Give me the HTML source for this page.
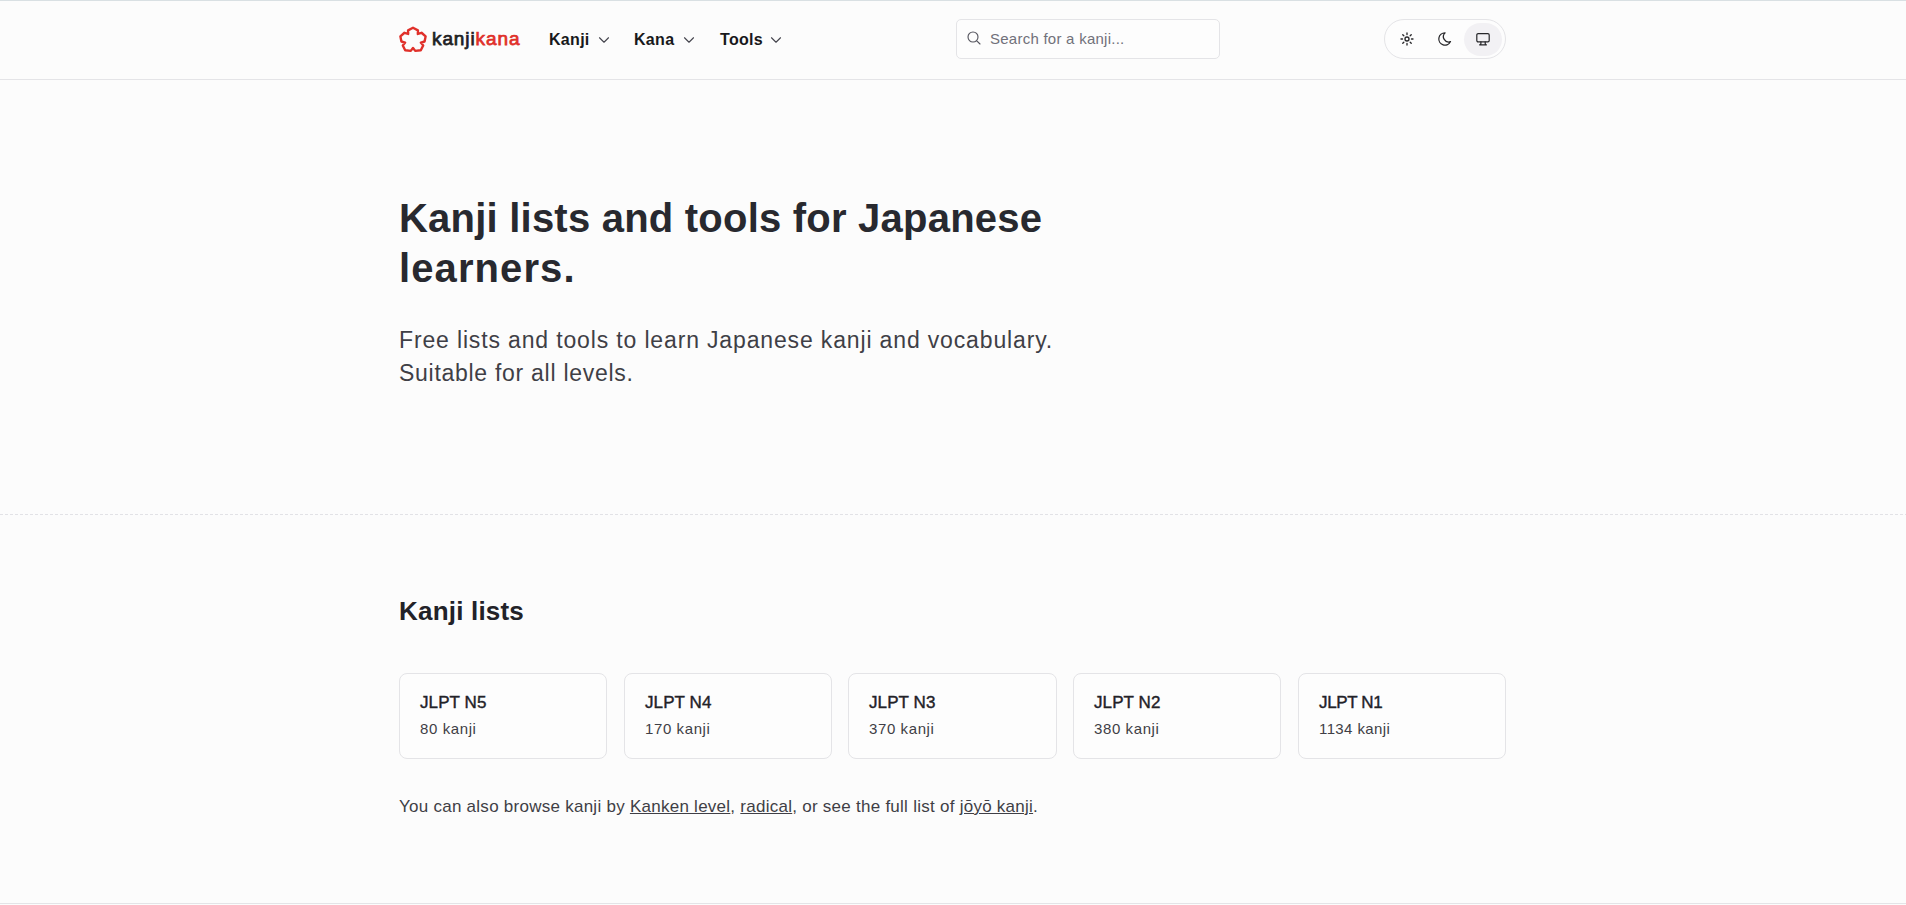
<!DOCTYPE html>
<html>
<head>
<meta charset="utf-8">
<style>
html,body{margin:0;padding:0;}
body{width:1906px;height:905px;overflow:hidden;background:#fcfcfc;position:relative;font-family:"Liberation Sans",sans-serif;color:#27272a;}
.abs{position:absolute;white-space:nowrap;}
#topline{position:absolute;left:0;top:0;width:1906px;height:1px;background:#d9e0e3;}
#header{position:absolute;left:0;top:0;width:1906px;height:79px;border-bottom:1px solid #e4e4e7;background:#fcfcfc;}
#logo{position:absolute;left:396px;top:22.7px;width:34px;height:34px;}
#logotext{left:432px;top:26.5px;font-size:19px;line-height:24px;letter-spacing:0.9px;font-weight:normal;-webkit-text-stroke:0.75px #1f1f24;color:#1f1f24;}
#logotext span{-webkit-text-stroke:0.75px #e0302a;}
#logotext span{color:#e0302a;}
.nav{top:31px;font-size:16px;line-height:18px;font-weight:bold;color:#18181b;letter-spacing:0.3px;}
.chev{position:absolute;width:18px;height:18px;}
#search{position:absolute;left:956px;top:19px;width:262px;height:38px;border:1px solid #e4e4e7;border-radius:5px;background:#fdfdfd;}
#searchtext{left:990px;top:30px;font-size:15px;line-height:18px;color:#71717a;letter-spacing:0.25px;}
#theme{position:absolute;left:1384px;top:19px;width:120px;height:38px;border:1px solid #e4e4e7;border-radius:20px;background:#fdfdfd;}
#active{position:absolute;left:1464px;top:23px;width:38px;height:33px;border-radius:16.5px;background:#f2f1f4;}
.ico{position:absolute;width:16px;height:16px;}
#h1{left:399px;top:193px;font-size:40px;line-height:50px;font-weight:bold;color:#28292f;}
#h1 .l1{letter-spacing:0.22px}#h1 .l2{letter-spacing:1.1px}
#sub{left:399px;top:324px;font-size:23px;line-height:33px;color:#3f3f46;}
#sub .l1{letter-spacing:0.85px}#sub .l2{letter-spacing:0.72px}
#dash{position:absolute;left:0;top:514px;width:1906px;height:1px;background:repeating-linear-gradient(90deg,#e2e2e6 0 3px,transparent 3px 5px);}
#h2{left:399px;top:595px;font-size:26px;line-height:32px;font-weight:bold;color:#222228;letter-spacing:0.2px;}
.card{position:absolute;top:673px;width:206px;height:84px;border:1px solid #e4e4e7;border-radius:8px;background:#fdfdfd;}
.ct{position:absolute;left:20px;top:18px;font-size:17px;line-height:22px;font-weight:normal;-webkit-text-stroke:0.4px #222228;color:#222228;white-space:nowrap;letter-spacing:0.1px;}
.cs{position:absolute;left:20px;top:44.5px;font-size:15px;line-height:20px;color:#3f3f46;white-space:nowrap;letter-spacing:0.6px;}
#para{left:399px;top:795px;font-size:17px;line-height:24px;color:#3f3f46;letter-spacing:0.26px;}
#para a{color:#3f3f46;text-decoration:underline;text-underline-offset:1px;}
#bottomline{position:absolute;left:0;top:903px;width:1906px;height:1px;background:#e4e4e7;}
</style>
</head>
<body>
<div id="header"></div>
<div id="topline"></div>
<svg id="logo" viewBox="0 0 34 34"><polygon fill="none" stroke="#e0302a" stroke-width="2.4" stroke-linejoin="round" points="12.07,7.32 17.00,4.80 21.93,7.32 21.84,10.97 25.53,9.77 29.62,13.37 28.58,18.53 24.84,19.58 27.20,22.48 24.80,27.23 19.23,27.90 17.00,24.90 14.77,27.90 9.20,27.23 6.80,22.48 9.16,19.58 5.42,18.53 4.38,13.37 8.47,9.77 12.16,10.97"/></svg>
<div id="logotext" class="abs">kanji<span>kana</span></div>

<div class="abs nav" style="left:549px;">Kanji</div>
<svg class="chev" style="left:594.8px;top:30.5px" viewBox="0 0 24 24" fill="none" stroke="#45454e" stroke-width="1.5" stroke-linecap="round" stroke-linejoin="round"><path d="m6 9 6 6 6-6"/></svg>
<div class="abs nav" style="left:634px;">Kana</div>
<svg class="chev" style="left:679.8px;top:30.5px" viewBox="0 0 24 24" fill="none" stroke="#45454e" stroke-width="1.5" stroke-linecap="round" stroke-linejoin="round"><path d="m6 9 6 6 6-6"/></svg>
<div class="abs nav" style="left:720px;">Tools</div>
<svg class="chev" style="left:767px;top:30.5px" viewBox="0 0 24 24" fill="none" stroke="#45454e" stroke-width="1.5" stroke-linecap="round" stroke-linejoin="round"><path d="m6 9 6 6 6-6"/></svg>

<div id="search"></div>
<svg class="ico" style="left:965.6px;top:29.6px" viewBox="0 0 24 24" fill="none" stroke="#55555e" stroke-width="1.7" stroke-linecap="round" stroke-linejoin="round"><path d="m21 21-5.197-5.197m0 0A7.5 7.5 0 1 0 5.196 5.196a7.5 7.5 0 0 0 10.607 10.607Z"/></svg>
<div id="searchtext" class="abs">Search for a kanji...</div>

<div id="theme"></div>
<div id="active"></div>
<svg class="ico" style="left:1399px;top:31.3px" viewBox="0 0 24 24" fill="none" stroke="#27272a" stroke-width="2" stroke-linecap="round" stroke-linejoin="round"><path d="M12 3v2.25m6.364.386-1.591 1.591M21 12h-2.25m-.386 6.364-1.591-1.591M12 18.75V21m-4.773-4.227-1.591 1.591M5.25 12H3m4.227-4.773L5.636 5.636"/><circle cx="12" cy="12" r="3"/></svg>
<svg class="ico" style="left:1437px;top:31px" viewBox="0 0 24 24" fill="none" stroke="#27272a" stroke-width="1.9" stroke-linecap="round" stroke-linejoin="round"><path d="M12.15 2.8A9.2 9.2 0 1 0 20.25 15.9A7.85 7.85 0 0 1 12.15 2.8Z"/></svg>
<svg class="ico" style="left:1475px;top:31px" viewBox="0 0 24 24" fill="none" stroke="#27272a" stroke-width="1.8" stroke-linecap="round" stroke-linejoin="round"><rect x="2.7" y="3.9" width="18.6" height="12.4" rx="2"/><path d="M8.85 16.3v2.4q0 1-1 1.6M15.3 16.3v2.4q0 1 1 1.6M6.9 20.7h10.3"/></svg>

<div id="h1" class="abs"><span class="l1">Kanji lists and tools for Japanese</span><br><span class="l2">learners.</span></div>
<div id="sub" class="abs"><span class="l1">Free lists and tools to learn Japanese kanji and vocabulary.</span><br><span class="l2">Suitable for all levels.</span></div>

<div id="dash"></div>

<div id="h2" class="abs">Kanji lists</div>

<div class="card" style="left:399px"><div class="ct">JLPT N5</div><div class="cs">80 kanji</div></div>
<div class="card" style="left:624px"><div class="ct">JLPT N4</div><div class="cs">170 kanji</div></div>
<div class="card" style="left:848px;width:207px"><div class="ct">JLPT N3</div><div class="cs">370 kanji</div></div>
<div class="card" style="left:1073px"><div class="ct">JLPT N2</div><div class="cs">380 kanji</div></div>
<div class="card" style="left:1298px"><div class="ct" style="letter-spacing:-0.35px">JLPT N1</div><div class="cs" style="letter-spacing:0.4px">1134 kanji</div></div>

<div id="para" class="abs">You can also browse kanji by <a>Kanken level</a>, <a>radical</a>, or see the full list of <a>jōyō kanji</a>.</div>

<div id="bottomline"></div>
</body>
</html>
